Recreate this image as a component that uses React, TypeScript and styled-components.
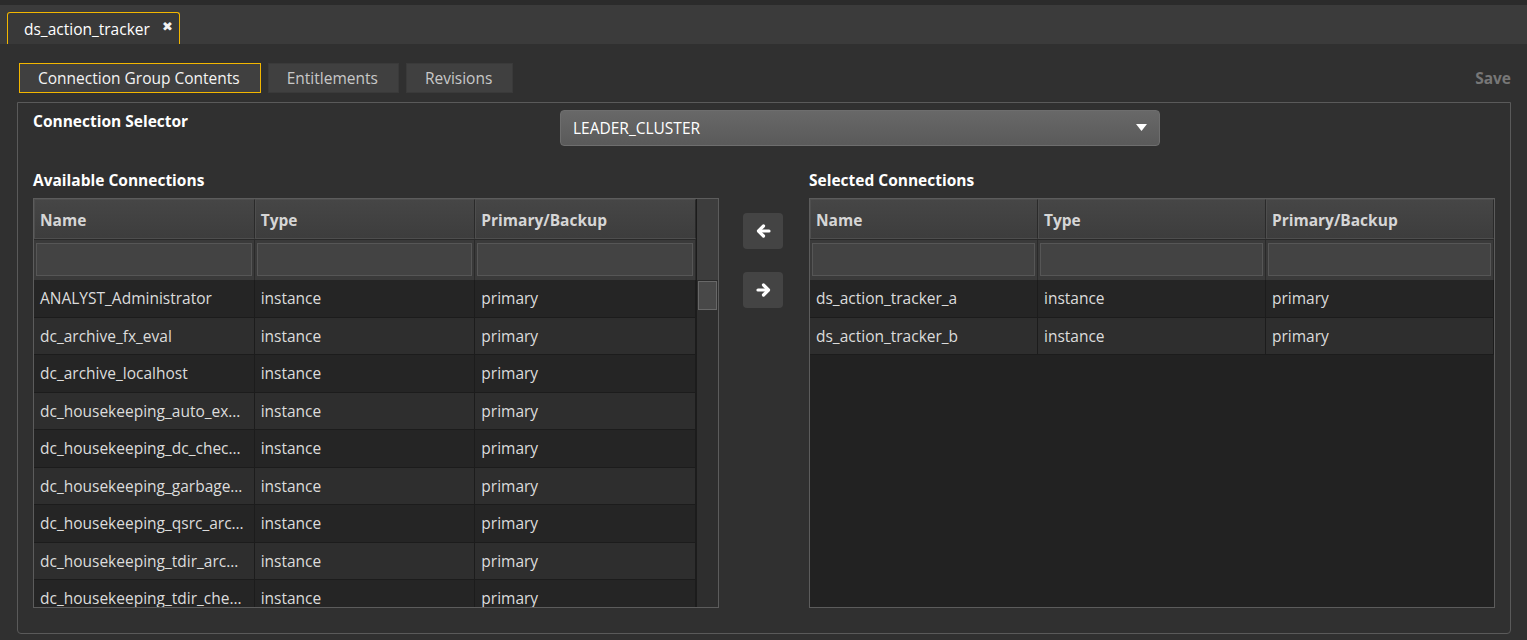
import styled, { createGlobalStyle } from 'styled-components';

type Row = { name: string; type: string; role: string };

const available: Row[] = [
  { name: 'ANALYST_Administrator', type: 'instance', role: 'primary' },
  { name: 'dc_archive_fx_eval', type: 'instance', role: 'primary' },
  { name: 'dc_archive_localhost', type: 'instance', role: 'primary' },
  { name: 'dc_housekeeping_auto_exec_trades', type: 'instance', role: 'primary' },
  { name: 'dc_housekeeping_dc_check_archive', type: 'instance', role: 'primary' },
  { name: 'dc_housekeeping_garbage_collect', type: 'instance', role: 'primary' },
  { name: 'dc_housekeeping_qsrc_archive', type: 'instance', role: 'primary' },
  { name: 'dc_housekeeping_tdir_archive', type: 'instance', role: 'primary' },
  { name: 'dc_housekeeping_tdir_check_space', type: 'instance', role: 'primary' },
];

const selected: Row[] = [
  { name: 'ds_action_tracker_a', type: 'instance', role: 'primary' },
  { name: 'ds_action_tracker_b', type: 'instance', role: 'primary' },
];

const GlobalStyle = createGlobalStyle`
  html, body {
    margin: 0;
    background: #2b2b2b;
    font-family: 'Open Sans', 'Noto Sans', sans-serif;
  }
`;

const Window = styled.div`
  padding-top: 5px;
  height: 640px;
  box-sizing: border-box;
  display: flex;
  flex-direction: column;
`;

const TabStrip = styled.div`
  height: 39px;
  background: #3b3b3b;
  display: flex;
  align-items: flex-end;
  padding-left: 7px;
`;

const DocTab = styled.div`
  height: 32px;
  box-sizing: border-box;
  border: 1px solid #f2b600;
  border-bottom: none;
  border-radius: 3px 3px 0 0;
  background: #393939;
  color: #fff;
  font-size: 15.5px;
  display: flex;
  align-items: center;
  gap: 12px;
  padding: 0 6px 0 16px;
`;

const Close = styled.span`
  font-size: 13px;
  color: #f2f2f2;
  margin-top: -6px;
`;

const Content = styled.div`
  flex: 1;
  background: #303030;
  padding: 19px 16px 6px 17px;
  display: flex;
  flex-direction: column;
`;

const SubTabs = styled.div`
  display: flex;
  align-items: center;
  gap: 7px;
  height: 30px;
  padding-left: 2px;
`;

const SubTab = styled.div<{ $active?: boolean }>`
  height: 30px;
  box-sizing: border-box;
  padding: 0 20px 0 18px;
  display: flex;
  align-items: center;
  font-size: 15.5px;
  background: #404040;
  color: ${(p) => (p.$active ? '#f4f4f4' : '#c8c8c8')};
  border: 1px solid ${(p) => (p.$active ? '#f2b600' : '#3a3a3a')};
`;

const Save = styled.div`
  margin-left: auto;
  color: #777;
  font-weight: 700;
  font-size: 15.5px;
`;

const Panel = styled.div`
  margin-top: 9px;
  height: 532px;
  box-sizing: border-box;
  border: 1px solid #5a5a5a;
  border-radius: 0 0 4px 4px;
  padding: 7px 15px 0;
  display: flex;
  flex-direction: column;
`;

const SelectorRow = styled.div`
  display: grid;
  grid-template-columns: 527px 600px;
  align-items: start;
`;

const Label = styled.div<{ $offset?: number }>`
  color: #fff;
  font-weight: 700;
  font-size: 15.5px;
  line-height: 20px;
  margin-top: ${(p) => p.$offset ?? 0}px;
`;

const Dropdown = styled.div`
  height: 36px;
  box-sizing: border-box;
  border-radius: 4px;
  border: 1px solid #6e6e6e;
  background: linear-gradient(#686868, #5a5a5a);
  color: #fff;
  font-size: 15.5px;
  display: flex;
  align-items: center;
  justify-content: space-between;
  padding: 0 12px;
`;

const Lists = styled.div`
  margin-top: 24px;
  display: grid;
  grid-template-columns: 686px 90px 686px;
`;

const Column = styled.div`
  display: flex;
  flex-direction: column;
`;

const Table = styled.div`
  margin-top: 8px;
  height: 410px;
  box-sizing: border-box;
  border: 1px solid #5c5c5c;
  background: #222;
  display: flex;
  overflow: hidden;
`;

const Grid = styled.div`
  flex: 1;
  display: flex;
  flex-direction: column;
  min-width: 0;
`;

const HeadRow = styled.div`
  display: grid;
  grid-template-columns: 1fr 1fr 1fr;
  height: 41px;
  box-sizing: border-box;
  flex-shrink: 0;
  border-bottom: 1px solid #2a2a2a;
`;

const HeadCell = styled.div`
  border: 1px solid #4e4e4e;
  border-right-color: #2a2a2a;
  background: linear-gradient(#464646, #3d3d3d);
  color: #d6d6d6;
  font-weight: 700;
  font-size: 15.5px;
  display: flex;
  align-items: center;
  padding: 2px 0 0 5px;
`;

const FilterRow = styled.div`
  display: grid;
  grid-template-columns: 1fr 1fr 1fr;
  height: 40px;
  flex-shrink: 0;
  background: #3a3a3a;
`;

const FilterCell = styled.div`
  padding: 3px 2px 4px 2px;
  border-right: 1px solid #2a2a2a;
  display: flex;
`;

const FilterInput = styled.div`
  flex: 1;
  background: #434343;
  border: 1px solid #565656;
`;

const DataRow = styled.div<{ $odd: boolean }>`
  display: grid;
  grid-template-columns: 1fr 1fr 1fr;
  height: 37.5px;
  flex-shrink: 0;
  box-sizing: border-box;
  border-bottom: 1px solid #1c1c1c;
  background: ${(p) => (p.$odd ? '#2e2e2e' : '#252525')};
`;

const Cell = styled.div`
  color: #dcdcdc;
  font-size: 15.5px;
  line-height: 37px;
  padding: 0 6px;
  border-right: 1px solid #1c1c1c;
  white-space: nowrap;
  overflow: hidden;
  text-overflow: ellipsis;
  min-width: 0;
`;

const Scrollbar = styled.div`
  width: 21px;
  flex-shrink: 0;
  background: #2e2e2e;
  border-left: 1px solid #1c1c1c;
  display: flex;
  flex-direction: column;
`;

const ScrollHead = styled.div`
  height: 81px;
  background: #3d3d3d;
  border-bottom: 1px solid #2a2a2a;
`;

const Thumb = styled.div`
  margin: 0 1px;
  height: 27px;
  background: #484848;
  border: 1px solid #686868;
`;

const Movers = styled.div`
  display: flex;
  flex-direction: column;
  align-items: center;
  padding-top: 43px;
  padding-right: 2px;
  gap: 23px;
`;

const MoveButton = styled.button`
  width: 40px;
  height: 36px;
  border: none;
  border-radius: 4px;
  background: #444;
  display: flex;
  align-items: center;
  justify-content: center;
  padding: 0;
`;

const Arrow = ({ left }: { left?: boolean }) => (
  <svg width="15" height="14" viewBox="0 0 15 14">
    <g
      transform={left ? undefined : 'translate(15 0) scale(-1 1)'}
      stroke="#fff"
      strokeWidth="3.2"
      strokeLinecap="round"
      strokeLinejoin="round"
      fill="none"
    >
      <path d="M7.5 2 L2.5 7 L7.5 12" />
      <path d="M3 7 H13" />
    </g>
  </svg>
);

const ListTable = ({ rows, scroll }: { rows: Row[]; scroll?: boolean }) => (
  <Table>
    <Grid>
      <HeadRow>
        <HeadCell>Name</HeadCell>
        <HeadCell>Type</HeadCell>
        <HeadCell>Primary/Backup</HeadCell>
      </HeadRow>
      <FilterRow>
        <FilterCell><FilterInput /></FilterCell>
        <FilterCell><FilterInput /></FilterCell>
        <FilterCell><FilterInput /></FilterCell>
      </FilterRow>
      {rows.map((r, i) => (
        <DataRow key={r.name} $odd={i % 2 === 1}>
          <Cell>{r.name}</Cell>
          <Cell>{r.type}</Cell>
          <Cell>{r.role}</Cell>
        </DataRow>
      ))}
    </Grid>
    {scroll && (
      <Scrollbar>
        <ScrollHead />
        <Thumb />
      </Scrollbar>
    )}
  </Table>
);

export default function App() {
  return (
    <>
      <GlobalStyle />
      <Window>
        <TabStrip>
          <DocTab>
            ds_action_tracker
            <Close>✖</Close>
          </DocTab>
        </TabStrip>
        <Content>
          <SubTabs>
            <SubTab $active>Connection Group Contents</SubTab>
            <SubTab>Entitlements</SubTab>
            <SubTab>Revisions</SubTab>
            <Save>Save</Save>
          </SubTabs>
          <Panel>
            <SelectorRow>
              <Label $offset={1}>Connection Selector</Label>
              <Dropdown>
                LEADER_CLUSTER
                <svg width="11" height="8" viewBox="0 0 11 8">
                  <polygon points="0,0 11,0 5.5,7" fill="#fff" />
                </svg>
              </Dropdown>
            </SelectorRow>
            <Lists>
              <Column>
                <Label>Available Connections</Label>
                <ListTable rows={available} scroll />
              </Column>
              <Movers>
                <MoveButton aria-label="remove">
                  <Arrow left />
                </MoveButton>
                <MoveButton aria-label="add">
                  <Arrow />
                </MoveButton>
              </Movers>
              <Column>
                <Label>Selected Connections</Label>
                <ListTable rows={selected} />
              </Column>
            </Lists>
          </Panel>
        </Content>
      </Window>
    </>
  );
}
